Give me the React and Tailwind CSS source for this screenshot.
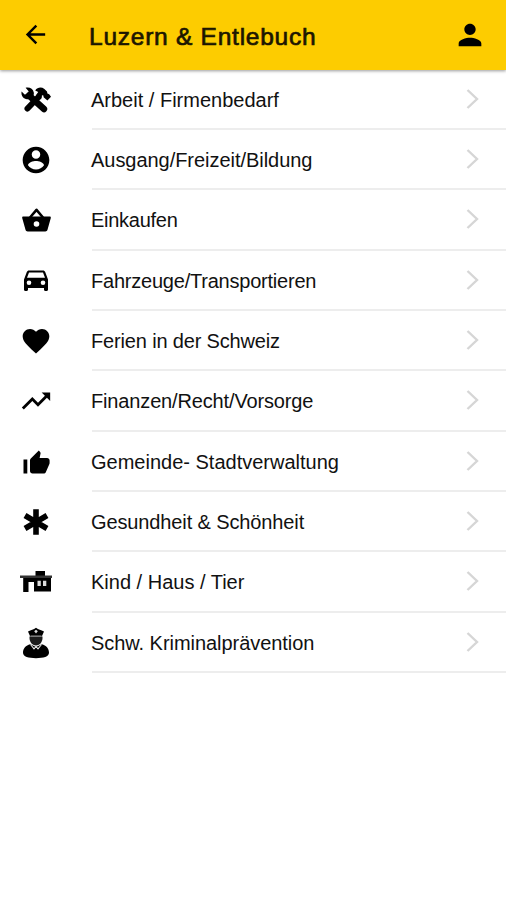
import React from 'react';
import { MdArrowBack, MdPerson, MdFavorite, MdTrendingUp } from 'react-icons/md';

const ToolsIcon = () => (
  <svg width="30" height="26" viewBox="0 0 30 26" fill="none" stroke="currentColor">
    <path d="M17.500 10L6.500 21.500" strokeWidth="6" strokeLinecap="round" />
    <path d="M8 8.500L23 22" strokeWidth="6.400" strokeLinecap="round" />
    <path
      d="M4.600 .8L7.600 4.200L6.600 7L3.600 7.600L.6 4.400C-.2 8.400 2.200 11.800 6 12.200C10.600 12.600 13.400 9 12.800 5.400C12 1.600 8.400-.2 4.600 .8Z"
      fill="currentColor"
      stroke="none"
    />
    <path
      d="M14.200 3.400C16.600 .2 20.400-.2 23.400 2L26 4.600L26.400 6.600L28.200 7.200L30 9.800L26.400 13.600L22.600 10.200L22.400 8.400L21 8.200L20 12.500L14.800 8.400L17.200 5Z"
      fill="currentColor"
      stroke="none"
    />
  </svg>
);

const AccountIcon = () => (
  <svg width="32" height="32" viewBox="0 0 24 24" fill="currentColor">
    <path d="M12 2C6.48 2 2 6.48 2 12s4.48 10 10 10 10-4.48 10-10S17.52 2 12 2zm0 2.700c1.8 0 3.200 1.400 3.200 3.200s-1.400 3.200-3.200 3.200-3.200-1.400-3.200-3.200 1.400-3.200 3.200-3.200zm0 14.500c-2.500 0-4.710-1.280-6-3.220.03-2.200 4-3.280 6-3.280 1.990 0 5.970 1.090 6 3.280-1.290 1.940-3.500 3.220-6 3.220z" />
  </svg>
);

const BasketIcon = () => (
  <svg width="29" height="24" viewBox="0 0 29 24" fill="currentColor">
    <path d="M8 9.500L14.500 1.800L21 9.500" fill="none" stroke="currentColor" strokeWidth="2.6" strokeLinejoin="round" />
    <path d="M1.200 8.500H27.800C28.600 8.500 29 9.200 28.800 9.900L25.500 21.800C25.200 22.900 24.400 23.500 23.300 23.500H5.700C4.600 23.500 3.800 22.900 3.500 21.800L.2 9.900C0 9.200 .4 8.500 1.200 8.500z" />
    <circle cx="14.500" cy="16" r="2.800" fill="white" />
  </svg>
);

const CarIcon = () => (
  <svg width="24" height="21" viewBox="0 0 24 21" fill="currentColor">
    <path
      fillRule="evenodd"
      d="M5 .5H19C20 .5 20.900 1.100 21.200 2L24 9.500V19.800C24 20.500 23.500 21 22.800 21H21.200C20.500 21 20 20.500 20 19.800V18H4V19.800C4 20.500 3.500 21 2.800 21H1.200C.5 21 0 20.500 0 19.800V9.500L2.800 2C3.100 1.100 4 .5 5 .5zM5 2.500L3 7.800H21L19 2.500z"
    />
    <circle cx="5" cy="12.800" r="2.300" fill="white" />
    <circle cx="19" cy="12.800" r="2.300" fill="white" />
  </svg>
);

const ThumbIcon = () => (
  <svg width="27" height="24" viewBox="0 0 27 24" fill="currentColor">
    <path d="M.5 9.500h3.800v14H.5zM7 10.500c0-.8.3-1.400.8-1.900L15.800.6l1.300 1.300c.4.4.6.9.5 1.400L16.600 8H24c1.500 0 2.600 1.100 2.600 2.500v2.600c0 .4-.1.7-.2 1l-3.500 7.800c-.4 1-1.300 1.600-2.400 1.600H9.500C8.100 23.500 7 22.400 7 21z" />
  </svg>
);

const AsteriskIcon = () => (
  <svg width="26" height="26" viewBox="0 0 26 26" stroke="currentColor" strokeWidth="5.6">
    <path d="M13 .2V25.800M2 6.500L24 19.500M24 6.500L2 19.500" />
  </svg>
);

const HouseIcon = () => (
  <svg width="32" height="22" viewBox="0 0 32 22" fill="currentColor">
    <path d="M15.500 0H25V5H15.500z" />
    <path d="M0 4.500H32V7H0z" fill="#333" />
    <path d="M3.200 7H31V20.500H14V11H8.500V21H3.200z" />
    <path d="M17.500 9.800H20.800V15H17.500zM23 9.800H26.300V15H23z" fill="#ddd" />
  </svg>
);

const PoliceIcon = () => (
  <svg width="26" height="32" viewBox="0 0 26 32" fill="currentColor">
    <path d="M5 4.600C8 3 10.500 2.600 13 .8C15.500 2.600 18 3 21 4.600L18.800 9.500H7.200z" />
    <path d="M6.500 9.500H19.500C20 14.500 17 18.500 13 18.500S6 14.500 6.500 9.500z" fill="#1c1c1c" />
    <path d="M7.200 17.300C2.800 18.500 0 21.500 0 25.800C0 29.600 5.500 31.200 13 31.200S26 29.600 26 25.800C26 21.500 23.200 18.500 18.800 17.300L13 20z" />
    <path d="M7.500 9H18.500" stroke="#bbb" strokeWidth=".8" />
    <path d="M11.200 4.200L13 2.800L14.800 4.200L13 6.400z" fill="#ddd" />
    <path d="M7.500 17.500L11 21.800L13 19.500L15 21.800L18.500 17.500" fill="none" stroke="#ddd" strokeWidth="1.100" />
  </svg>
);

const categories = [
  { label: 'Arbeit / Firmenbedarf', icon: <ToolsIcon />, tracking: 'tracking-normal' },
  { label: 'Ausgang/Freizeit/Bildung', icon: <AccountIcon />, tracking: 'tracking-[-0.04px]' },
  { label: 'Einkaufen', icon: <BasketIcon />, tracking: 'tracking-[-0.27px]' },
  { label: 'Fahrzeuge/Transportieren', icon: <CarIcon />, tracking: 'tracking-[-0.22px]' },
  { label: 'Ferien in der Schweiz', icon: <MdFavorite size={32} />, tracking: 'tracking-[-0.16px]' },
  { label: 'Finanzen/Recht/Vorsorge', icon: <MdTrendingUp size={34} />, tracking: 'tracking-[-0.15px]' },
  { label: 'Gemeinde- Stadtverwaltung', icon: <ThumbIcon />, tracking: 'tracking-normal' },
  { label: 'Gesundheit & Schönheit', icon: <AsteriskIcon />, tracking: 'tracking-[-0.12px]' },
  { label: 'Kind / Haus / Tier', icon: <HouseIcon />, tracking: 'tracking-normal' },
  { label: 'Schw. Kriminalprävention', icon: <PoliceIcon />, tracking: 'tracking-[-0.05px]' },
];

const CategoryRow = ({ label, icon, tracking }) => (
  <li className="flex h-[60.35px]">
    <div className="flex w-[72px] shrink-0 items-center justify-center text-black">{icon}</div>
    <div className="ml-5 flex flex-1 items-center justify-between border-b-2 border-[#ededed] pr-[27px]">
      <span className={`-ml-px whitespace-nowrap pt-[2px] text-[20px] leading-6 text-[#111] ${tracking}`}>{label}</span>
      <svg width="13" height="20" viewBox="0 0 13 20" fill="none" stroke="#d6d6d6" strokeWidth="2.4">
        <path d="M1.500 1L11 10L1.500 19" />
      </svg>
    </div>
  </li>
);

const App = () => {
  return (
    <div className="min-h-screen overflow-hidden bg-white font-['Liberation_Sans',Arial,sans-serif]">
      <header className="flex h-[69.5px] items-center bg-[#fdcc00] pr-[19px] text-black shadow-[0_1px_3px_rgba(0,0,0,0.4)]">
        <div className="flex w-[70px] justify-center">
          <MdArrowBack size={29} />
        </div>
        <h1 className="ml-[19px] flex-1 whitespace-nowrap pt-1 text-[24.5px] leading-8 tracking-[0.75px] text-[#1c1600] [-webkit-text-stroke:0.7px_#1c1600]">
          Luzern &amp; Entlebuch
        </h1>
        <MdPerson size={34} />
      </header>

      <ul>
        {categories.map((category) => (
          <CategoryRow key={category.label} {...category} />
        ))}
      </ul>
    </div>
  );
};

export default App;
